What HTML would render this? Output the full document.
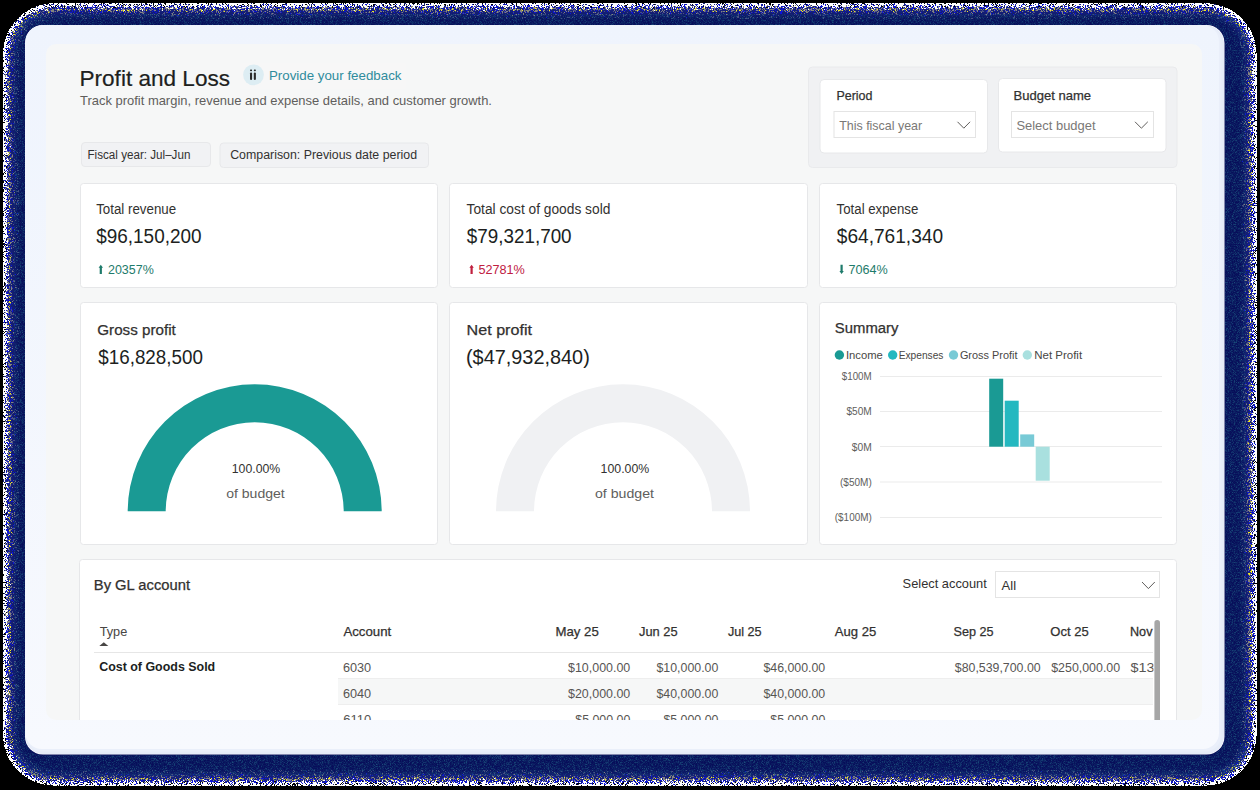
<!DOCTYPE html>
<html>
<head>
<meta charset="utf-8">
<title>Profit and Loss</title>
<style>
html,body{margin:0;padding:0;background:#000;width:1260px;height:790px;overflow:hidden;}
svg{display:block;}
text{font-family:"Liberation Sans",sans-serif;}
</style>
</head>
<body>
<svg width="1260" height="790" viewBox="0 0 1260 790">
<defs>
  <linearGradient id="cardg" x1="0" y1="0" x2="0" y2="1"><stop offset="0" stop-color="#eff4fd"/><stop offset="1" stop-color="#f7f9fe"/></linearGradient>
  <clipPath id="panelclip"><rect x="46" y="44" width="1156" height="676" rx="10"/></clipPath>
  <clipPath id="novclip"><rect x="1120" y="600" width="33.5" height="120"/></clipPath>
  <filter id="dith" x="0" y="0" width="1260" height="790" filterUnits="userSpaceOnUse" color-interpolation-filters="sRGB">
    <feGaussianBlur in="SourceAlpha" stdDeviation="5.5" result="A"/>
    <feComponentTransfer in="A" result="E"><feFuncA type="discrete" tableValues="0 1 1 1 1 1 1 1 1 1"/></feComponentTransfer>
    <feTurbulence type="fractalNoise" baseFrequency="1.7" numOctaves="2" seed="11" result="T"/>
    <feColorMatrix in="T" type="matrix" values="0 0 0 0 0  0 0 0 0 0  0 0 0 0 0  2.6 0 0 0 -0.76" result="N0"/>
    <feComponentTransfer in="N0" result="N"><feFuncA type="linear" slope="0.88" intercept="0.02"/></feComponentTransfer>
    <feComposite in="A" in2="N" operator="arithmetic" k1="0" k2="1" k3="-1" k4="0.44" result="D"/>
    <feComponentTransfer in="D" result="M"><feFuncA type="discrete" tableValues="0 1"/></feComponentTransfer>
    <feFlood flood-color="#16217a" result="NVL"/>
    <feFlood flood-color="#070e5a" result="NVD"/>
    <feComponentTransfer in="A" result="AD"><feFuncA type="table" tableValues="0 0 0 0 0.3 1"/></feComponentTransfer>
    <feComposite in="NVD" in2="AD" operator="in" result="NVD2"/>
    <feMerge result="NV"><feMergeNode in="NVL"/><feMergeNode in="NVD2"/></feMerge>
    <feComposite in="NV" in2="M" operator="in" result="navy0"/>
    <feComposite in="navy0" in2="E" operator="in" result="navy"/>
    <feColorMatrix in="A" type="matrix" values="0 0 0 1 0  0 0 0 1 0  0 0 0 1 0  0 0 0 0 1" result="AA"/>
    <feTurbulence type="fractalNoise" baseFrequency="1.9" numOctaves="2" seed="29" result="T2"/>
    <feColorMatrix in="T2" type="matrix" values="2.6 0 0 0 -0.8  2.6 0 0 0 -0.8  2.6 0 0 0 -0.8  0 0 0 0 1" result="T3"/>
    <feComposite in="AA" in2="T3" operator="arithmetic" k1="0" k2="1.1" k3="0.3" k4="-0.06" result="P"/>
    <feComponentTransfer in="P" result="C">
      <feFuncR type="discrete" tableValues="1 0 1 1 1 1 0 1 1 1 1 1 0 1 1 1 0.05 1 0.05 0.52 0.05 0.52 1 0.05 0.52 0.3 0.95 0.52 0.05 0.52 0.52 0.3 0.05 0.52 0.3 0.05 0.52 0.3 0.05 0.3"/>
      <feFuncG type="discrete" tableValues="1 0 1 1 1 1 0 1 1 1 1 1 0 1 1 1 0.08 1 0.08 0.52 0.08 0.52 1 0.08 0.52 0.32 0.92 0.52 0.08 0.52 0.52 0.32 0.08 0.52 0.32 0.08 0.52 0.32 0.08 0.32"/>
      <feFuncB type="discrete" tableValues="1 0 1 1 1 1 0 1 1 1 1 1 0 1 1 1 0.85 1 0.85 0.5 0.85 0.5 1 0.85 0.5 0.52 0.1 0.5 0.85 0.5 0.5 0.52 0.85 0.5 0.52 0.85 0.5 0.52 0.85 0.52"/>
      <feFuncA type="table" tableValues="1 1"/>
    </feComponentTransfer>
    <feComposite in="C" in2="E" operator="in" result="light"/>
    <feMerge><feMergeNode in="light"/><feMergeNode in="navy"/></feMerge>
  </filter>
  <filter id="spk" x="0" y="0" width="1260" height="790" filterUnits="userSpaceOnUse" color-interpolation-filters="sRGB">
    <feTurbulence type="fractalNoise" baseFrequency="1.5" numOctaves="1" seed="5" result="T"/>
    <feColorMatrix in="T" type="matrix" values="0 0 0 0 0.1  0 0 0 0 0.3  0 0 0 0 0.48  2.5 0 0 0 -1.05" result="S"/>
    <feComposite in="S" in2="SourceAlpha" operator="in"/>
  </filter>
</defs>
<!-- ===== FRAME ===== -->
<rect x="0" y="0" width="1260" height="790" fill="#000"/>
<g filter="url(#dith)"><rect x="9.5" y="9.8" width="1240.5" height="769.2" rx="44" fill="#000"/></g>
<path filter="url(#spk)" fill-rule="evenodd" fill="#fff" d="M14 42 A28 28 0 0 1 42 14 H1218 A28 28 0 0 1 1246 42 V748 A28 28 0 0 1 1218 776 H42 A28 28 0 0 1 14 748 Z M25 43 A18 18 0 0 1 43 25 H1207 A18 18 0 0 1 1225 43 V737 A18 18 0 0 1 1207 755 H43 A18 18 0 0 1 25 737 Z"/>
<rect x="25" y="25" width="1199.5" height="729.5" rx="18" fill="#ffffff"/>
<rect x="25.6" y="25.6" width="1198.4" height="728.4" rx="17.5" fill="#e6ecf8"/>
<rect x="25.6" y="25.6" width="1196" height="726" rx="17" fill="#eaeffa"/>
<rect x="25.6" y="25.6" width="1193.4" height="723.4" rx="16" fill="url(#cardg)"/>
<!-- grey panel -->
<rect x="46" y="44" width="1156" height="676" rx="10" fill="#f6f7f7"/>
<g id="content" clip-path="url(#panelclip)">
<!-- header -->
<text id="t1" x="79.50" y="85.6" font-size="22" fill="#201f1e" stroke="#201f1e" stroke-width="0.2" textLength="150.54" lengthAdjust="spacingAndGlyphs">Profit and Loss</text>
<rect x="240" y="63" width="166" height="26" rx="3" fill="#f7f7f7"/>
<circle cx="253.5" cy="74.8" r="10.4" fill="#ddedf3"/>
<rect x="250" y="69.6" width="2.1" height="1.7" rx="0.8" fill="#2b2b2b"/><rect x="250" y="72.4" width="2.1" height="7.6" rx="1" fill="#2b2b2b"/>
<rect x="253.8" y="69.6" width="2.1" height="1.7" rx="0.8" fill="#2b2b2b"/><rect x="253.8" y="72.4" width="2.1" height="7.6" rx="1" fill="#2b2b2b"/>
<text id="t2" x="268.90" y="79.6" font-size="13" fill="#2f8c9d" textLength="132.62" lengthAdjust="spacingAndGlyphs">Provide your feedback</text>
<text id="t3" x="80.00" y="104.5" font-size="13" fill="#605e5c" textLength="411.96" lengthAdjust="spacingAndGlyphs">Track profit margin, revenue and expense details, and customer growth.</text>
<rect x="81.5" y="142.5" width="129" height="24" rx="3.5" fill="#f1f2f4" stroke="#e7e8ea"/>
<text id="t4" x="87.50" y="158.9" font-size="12.5" fill="#323130" textLength="102.90" lengthAdjust="spacingAndGlyphs">Fiscal year: Jul–Jun</text>
<rect x="220" y="143" width="208.5" height="24.5" rx="3.5" fill="#f1f2f4" stroke="#e7e8ea"/>
<text id="t5" x="230.20" y="159" font-size="12.5" fill="#323130" textLength="186.84" lengthAdjust="spacingAndGlyphs">Comparison: Previous date period</text>
<!-- filter panel -->
<rect x="808.5" y="67" width="368.5" height="100.5" rx="4" fill="#f0f1f3" stroke="#e9eaec"/>
<rect x="820" y="79.5" width="167.5" height="73.5" rx="4" fill="#fff" stroke="#e7e8ea"/>
<text id="t6" x="836.40" y="100.0" font-size="13" fill="#323130" stroke="#323130" stroke-width="0.25" textLength="36.02" lengthAdjust="spacingAndGlyphs">Period</text>
<rect x="834" y="111.5" width="141.5" height="26" fill="#fff" stroke="#e4e4e4"/>
<text id="t7" x="839.20" y="130.1" font-size="13" fill="#7a7876" textLength="82.92" lengthAdjust="spacingAndGlyphs">This fiscal year</text>
<path d="M957.5 121.8 L963.8 128.2 L970.1 121.8" fill="none" stroke="#605e5c" stroke-width="1"/>
<rect x="998.5" y="78.5" width="167.5" height="73.5" rx="4" fill="#fff" stroke="#e7e8ea"/>
<text id="t8" x="1013.50" y="100.0" font-size="13" fill="#323130" stroke="#323130" stroke-width="0.25" textLength="77.52" lengthAdjust="spacingAndGlyphs">Budget name</text>
<rect x="1011.5" y="111.5" width="142" height="26" fill="#fff" stroke="#e4e4e4"/>
<text id="t9" x="1016.40" y="130.1" font-size="13" fill="#7a7876" textLength="79.14" lengthAdjust="spacingAndGlyphs">Select budget</text>
<path d="M1135 121.8 L1141.4 128.2 L1147.8 121.8" fill="none" stroke="#605e5c" stroke-width="1"/>
<!-- KPI cards -->
<rect x="80.5" y="183.5" width="357" height="104" rx="3" fill="#fff" stroke="#e6e7e9"/>
<rect x="449.5" y="183.5" width="358" height="104" rx="3" fill="#fff" stroke="#e6e7e9"/>
<rect x="819.5" y="183.5" width="357" height="104" rx="3" fill="#fff" stroke="#e6e7e9"/>
<text id="k1" x="96.20" y="214.2" font-size="14" fill="#323130" textLength="79.98" lengthAdjust="spacingAndGlyphs">Total revenue</text>
<text id="k2" x="96.20" y="243.4" font-size="20" fill="#201f1e" textLength="105.38" lengthAdjust="spacingAndGlyphs">$96,150,200</text>
<path d="M98.6 267.8 L100.8 264.8 L103 267.8 L101.9 267.8 L101.9 274 L99.7 274 L99.7 267.8 Z" fill="#1e7b6b"/>
<text id="k3" x="108.00" y="273.7" font-size="12.5" fill="#1e7b6b" textLength="45.74" lengthAdjust="spacingAndGlyphs">20357%</text>
<text id="k4" x="466.60" y="214.2" font-size="14" fill="#323130" textLength="143.76" lengthAdjust="spacingAndGlyphs">Total cost of goods sold</text>
<text id="k5" x="466.80" y="243.4" font-size="20" fill="#201f1e" textLength="104.82" lengthAdjust="spacingAndGlyphs">$79,321,700</text>
<path d="M469.4 267.8 L471.6 264.8 L473.8 267.8 L472.7 267.8 L472.7 274 L470.5 274 L470.5 267.8 Z" fill="#c0203f"/>
<text id="k6" x="478.40" y="273.7" font-size="12.5" fill="#c0203f" textLength="46.40" lengthAdjust="spacingAndGlyphs">52781%</text>
<text id="k7" x="836.60" y="214.2" font-size="14" fill="#323130" textLength="81.76" lengthAdjust="spacingAndGlyphs">Total expense</text>
<text id="k8" x="836.80" y="243.4" font-size="20" fill="#201f1e" textLength="106.26" lengthAdjust="spacingAndGlyphs">$64,761,340</text>
<path d="M839.4 271 L841.6 274 L843.8 271 L842.7 271 L842.7 264.8 L840.5 264.8 L840.5 271 Z" fill="#1e7b6b"/>
<text id="k9" x="848.40" y="273.7" font-size="12.5" fill="#1e7b6b" textLength="39.24" lengthAdjust="spacingAndGlyphs">7064%</text>
<!-- gauge cards -->
<rect x="80.5" y="302.5" width="357" height="242" rx="3" fill="#fff" stroke="#e6e7e9"/>
<rect x="449.5" y="302.5" width="358" height="242" rx="3" fill="#fff" stroke="#e6e7e9"/>
<rect x="819.5" y="302.5" width="357" height="242" rx="3" fill="#fff" stroke="#e6e7e9"/>
<text id="g1" x="97.30" y="335.4" font-size="14.5" fill="#323130" stroke="#323130" stroke-width="0.25" textLength="78.44" lengthAdjust="spacingAndGlyphs">Gross profit</text>
<text id="g2" x="98.30" y="364.4" font-size="20" fill="#201f1e" textLength="104.60" lengthAdjust="spacingAndGlyphs">$16,828,500</text>
<path d="M127.7 511.3 A127 127 0 0 1 381.7 511.3 L343.7 511.3 A89 89 0 0 0 165.7 511.3 Z" fill="#1a9a94"/>
<text id="g3" x="231.80" y="473.2" font-size="13" fill="#323130" textLength="48.46" lengthAdjust="spacingAndGlyphs">100.00%</text>
<text id="g4" x="226.20" y="497.8" font-size="13" fill="#605e5c" textLength="58.58" lengthAdjust="spacingAndGlyphs">of budget</text>
<text id="g5" x="466.60" y="335.4" font-size="14.5" fill="#323130" stroke="#323130" stroke-width="0.25" textLength="65.38" lengthAdjust="spacingAndGlyphs">Net profit</text>
<text id="g6" x="466.00" y="364.4" font-size="20" fill="#201f1e" textLength="123.80" lengthAdjust="spacingAndGlyphs">($47,932,840)</text>
<path d="M496 511.3 A127 127 0 0 1 750 511.3 L712 511.3 A89 89 0 0 0 534 511.3 Z" fill="#f0f1f3"/>
<text id="g7" x="600.60" y="473.2" font-size="13" fill="#323130" textLength="48.64" lengthAdjust="spacingAndGlyphs">100.00%</text>
<text id="g8" x="595.00" y="497.8" font-size="13" fill="#605e5c" textLength="58.92" lengthAdjust="spacingAndGlyphs">of budget</text>
<!-- summary -->
<text id="s1" x="834.80" y="333.1" font-size="14" fill="#323130" stroke="#323130" stroke-width="0.25" textLength="63.66" lengthAdjust="spacingAndGlyphs">Summary</text>
<circle cx="839.4" cy="355" r="4.7" fill="#1a9a94"/>
<text id="s2" x="845.90" y="358.9" font-size="11" fill="#484644" textLength="36.94" lengthAdjust="spacingAndGlyphs">Income</text>
<circle cx="892.7" cy="355" r="4.7" fill="#24b8c0"/>
<text id="s3" x="898.70" y="358.9" font-size="11" fill="#484644" textLength="44.78" lengthAdjust="spacingAndGlyphs">Expenses</text>
<circle cx="953.5" cy="355" r="4.7" fill="#78cad6"/>
<text id="s4" x="959.90" y="358.9" font-size="11" fill="#484644" textLength="57.56" lengthAdjust="spacingAndGlyphs">Gross Profit</text>
<circle cx="1027.3" cy="355" r="4.7" fill="#a9e0df"/>
<text id="s5" x="1034.20" y="358.9" font-size="11" fill="#484644" textLength="47.94" lengthAdjust="spacingAndGlyphs">Net Profit</text>
<g stroke="#ebebeb" stroke-width="1">
<line x1="880" y1="376.5" x2="1162" y2="376.5"/>
<line x1="880" y1="411.5" x2="1162" y2="411.5"/>
<line x1="880" y1="446.5" x2="1162" y2="446.5"/>
<line x1="880" y1="482" x2="1162" y2="482"/>
<line x1="880" y1="517.5" x2="1162" y2="517.5"/>
</g>
<text id="a1" x="841.80" y="379.8" font-size="10.5" fill="#605e5c" textLength="29.84" lengthAdjust="spacingAndGlyphs">$100M</text>
<text id="a2" x="846.50" y="415.2" font-size="10.5" fill="#605e5c" textLength="25.22" lengthAdjust="spacingAndGlyphs">$50M</text>
<text id="a3" x="851.80" y="450.6" font-size="10.5" fill="#605e5c" textLength="19.94" lengthAdjust="spacingAndGlyphs">$0M</text>
<text id="a4" x="840.00" y="486" font-size="10.5" fill="#605e5c" textLength="31.72" lengthAdjust="spacingAndGlyphs">($50M)</text>
<text id="a5" x="834.80" y="521.4" font-size="10.5" fill="#605e5c" textLength="36.94" lengthAdjust="spacingAndGlyphs">($100M)</text>
<rect x="989.2" y="378.7" width="14" height="68" fill="#1a9a94"/>
<rect x="1004.7" y="400.7" width="14" height="46" fill="#24b8c0"/>
<rect x="1020.2" y="434.4" width="14" height="12.3" fill="#78cad6"/>
<rect x="1035.7" y="446.7" width="14" height="34" fill="#a9e0df"/>
<!-- table card -->
<rect x="79.5" y="559.5" width="1097" height="200" rx="3" fill="#fff" stroke="#e6e7e9"/>
<text id="b1" x="93.80" y="589.6" font-size="14" fill="#323130" stroke="#323130" stroke-width="0.25" textLength="96.20" lengthAdjust="spacingAndGlyphs">By GL account</text>
<text id="b2" x="902.60" y="588.1" font-size="13" fill="#323130" textLength="84.24" lengthAdjust="spacingAndGlyphs">Select account</text>
<rect x="995.5" y="571.5" width="164" height="26" fill="#fff" stroke="#e4e4e4"/>
<text id="b3" x="1001.60" y="590.4" font-size="13" fill="#323130">All</text>
<path d="M1142 582 L1148.4 588.6 L1154.8 582" fill="none" stroke="#605e5c" stroke-width="1"/>
<rect x="338" y="678.5" width="815" height="26" fill="#f6f7f7"/>
<line x1="94" y1="652.5" x2="1153" y2="652.5" stroke="#e6e6e6"/>
<line x1="338" y1="678.5" x2="1153" y2="678.5" stroke="#eeeeee"/>
<line x1="338" y1="704.5" x2="1153" y2="704.5" stroke="#eeeeee"/>
<text id="h1" x="99.70" y="636.3" font-size="13" fill="#484644" textLength="27.58" lengthAdjust="spacingAndGlyphs">Type</text>
<text id="h2" x="343.40" y="636.3" font-size="13" fill="#323130" stroke="#323130" stroke-width="0.25" textLength="47.82" lengthAdjust="spacingAndGlyphs">Account</text>
<text id="h3" x="555.50" y="636.3" font-size="13" fill="#323130" stroke="#323130" stroke-width="0.25" textLength="43.30" lengthAdjust="spacingAndGlyphs">May 25</text>
<text id="h4" x="639.00" y="636.3" font-size="13" fill="#323130" stroke="#323130" stroke-width="0.25" textLength="38.58" lengthAdjust="spacingAndGlyphs">Jun 25</text>
<text id="h5" x="727.90" y="636.3" font-size="13" fill="#323130" stroke="#323130" stroke-width="0.25" textLength="33.76" lengthAdjust="spacingAndGlyphs">Jul 25</text>
<text id="h6" x="834.80" y="636.3" font-size="13" fill="#323130" stroke="#323130" stroke-width="0.25" textLength="41.54" lengthAdjust="spacingAndGlyphs">Aug 25</text>
<text id="h7" x="953.50" y="636.3" font-size="13" fill="#323130" stroke="#323130" stroke-width="0.25" textLength="40.02" lengthAdjust="spacingAndGlyphs">Sep 25</text>
<text id="h8" x="1050.30" y="636.3" font-size="13" fill="#323130" stroke="#323130" stroke-width="0.25" textLength="38.36" lengthAdjust="spacingAndGlyphs">Oct 25</text>
<path d="M99.3 646 L103.8 642.2 L108.3 646 Z" fill="#484644"/>
<text id="r1" x="99.20" y="671.3" font-size="13" fill="#201f1e" font-weight="bold" textLength="116.02" lengthAdjust="spacingAndGlyphs">Cost of Goods Sold</text>
<text id="r2" x="342.90" y="672" font-size="13" fill="#575553" textLength="28.24" lengthAdjust="spacingAndGlyphs">6030</text>
<text id="r3" x="342.90" y="698" font-size="13" fill="#575553" textLength="28.24" lengthAdjust="spacingAndGlyphs">6040</text>
<text id="r4" x="343.20" y="724" font-size="13" fill="#575553">6110</text>
<text id="v1" x="568.00" y="672" font-size="13" fill="#575553" textLength="62.30" lengthAdjust="spacingAndGlyphs">$10,000.00</text>
<text id="v2" x="656.50" y="672" font-size="13" fill="#575553" textLength="61.86" lengthAdjust="spacingAndGlyphs">$10,000.00</text>
<text id="v3" x="763.40" y="672" font-size="13" fill="#575553" textLength="61.86" lengthAdjust="spacingAndGlyphs">$46,000.00</text>
<text id="v4" x="954.80" y="672" font-size="13" fill="#575553" textLength="85.86" lengthAdjust="spacingAndGlyphs">$80,539,700.00</text>
<text id="v5" x="1051.20" y="672" font-size="13" fill="#575553" textLength="68.96" lengthAdjust="spacingAndGlyphs">$250,000.00</text>
<text id="v6" x="568.00" y="698" font-size="13" fill="#575553" textLength="62.30" lengthAdjust="spacingAndGlyphs">$20,000.00</text>
<text id="v7" x="656.50" y="698" font-size="13" fill="#575553" textLength="61.86" lengthAdjust="spacingAndGlyphs">$40,000.00</text>
<text id="v8" x="763.40" y="698" font-size="13" fill="#575553" textLength="61.86" lengthAdjust="spacingAndGlyphs">$40,000.00</text>
<text id="v9" x="575.30" y="724" font-size="13" fill="#575553" textLength="55.02" lengthAdjust="spacingAndGlyphs">$5,000.00</text>
<text id="v10" x="663.40" y="724" font-size="13" fill="#575553" textLength="55.02" lengthAdjust="spacingAndGlyphs">$5,000.00</text>
<text id="v11" x="770.30" y="724" font-size="13" fill="#575553" textLength="55.02" lengthAdjust="spacingAndGlyphs">$5,000.00</text>
<g clip-path="url(#novclip)">
<text x="1130" y="636.3" font-size="13" fill="#323130" stroke="#323130" stroke-width="0.3" textLength="40" lengthAdjust="spacingAndGlyphs">Nov 25</text>
<text x="1130.4" y="672" font-size="13" fill="#575553" textLength="72" lengthAdjust="spacingAndGlyphs">$13,000.00</text>
</g>
<rect x="1154.4" y="620" width="5.6" height="120" rx="2.8" fill="#a6a6a6"/>
</g>
</svg>
</body>
</html>
